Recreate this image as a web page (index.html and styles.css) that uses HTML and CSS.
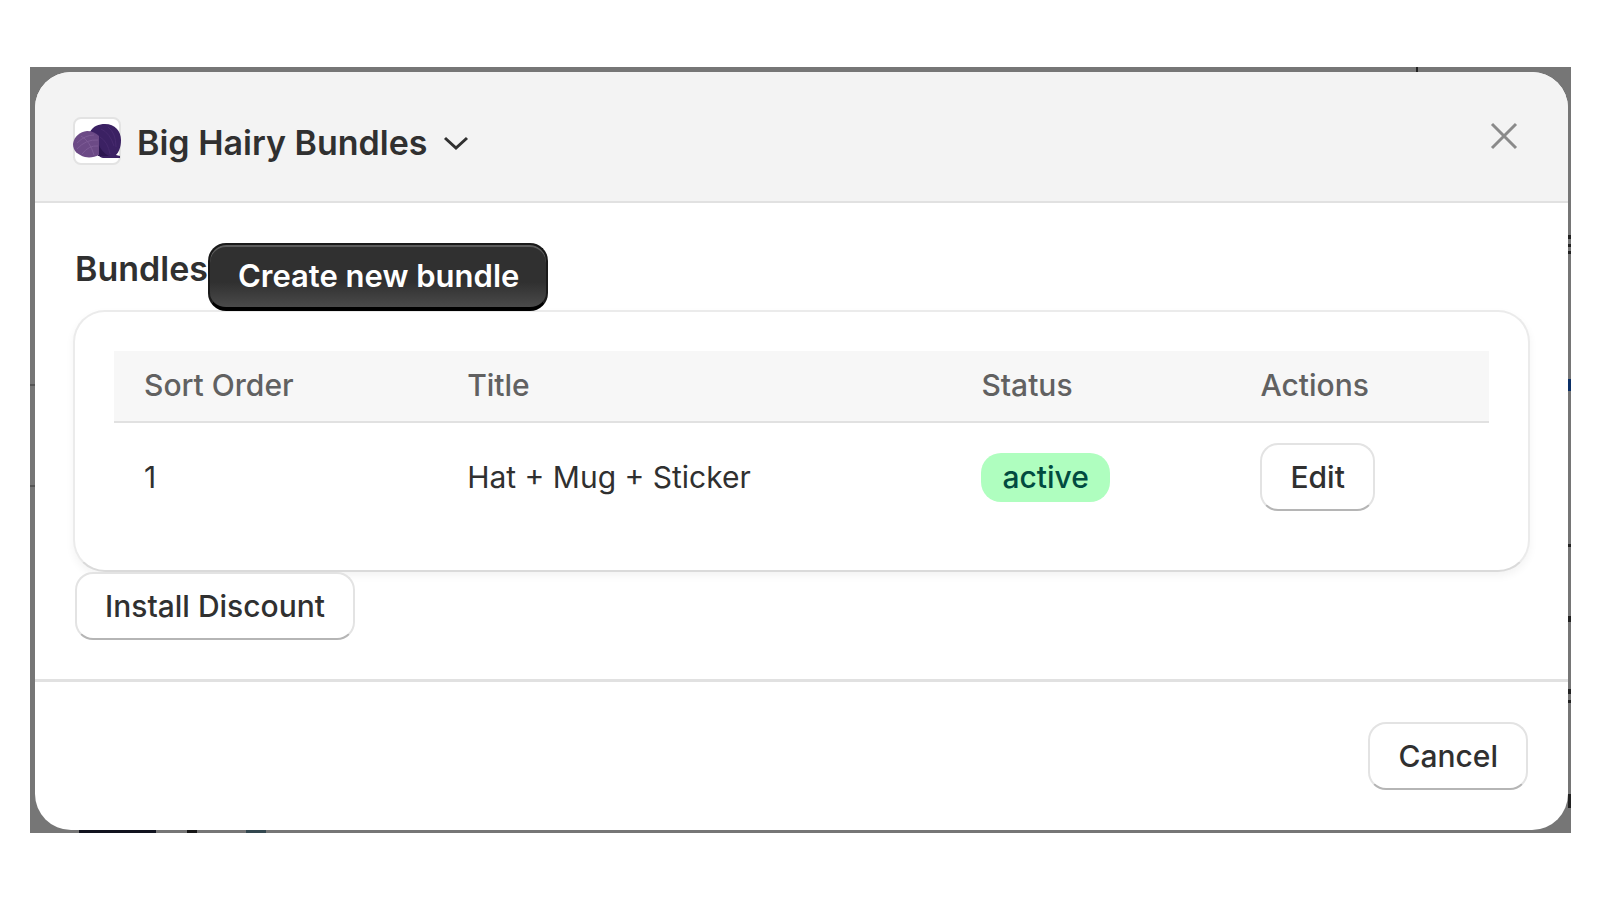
FILE: index.html
```
<!DOCTYPE html>
<html lang="en">
<head>
    <meta charset="UTF-8">
    <title>Big Hairy Bundles</title>
    <link rel="stylesheet" href="styles.css">
</head>
<body>
    <div class="backdrop">
        <div class="modal" role="dialog" aria-labelledby="app-title">
            <!-- Header -->
            <header class="modal-header">
                <button type="button" class="app-menu">
                    <svg class="app-logo" viewBox="0 0 48 48" aria-hidden="true">
                        <rect x="1" y="1" width="46" height="46" rx="7" fill="#fff" stroke="#e3e3e3" stroke-width="2"/>
                        <path d="M17 15C20 9 26 7 32 7C42 7 48 14 48 23C48 30 46 35 43 38L47 39V41H30C25 40 24 36 24 34Z" fill="#3b2163"/>
                        <path d="M28 12q9 4 13 17M35 10q8 6 8 20M27 20q8 5 10 17" fill="none" stroke="#472a6e" stroke-width="1"/>
                        <path d="M25 26V39H36Q29 36 25 26Z" fill="#2c1650"/>
                        <path d="M0 27C1 19 7 15 14 14C19 14 23 16 26 19V38C22 40 17 41 12 40C5 38 0 34 0 27Z" fill="#6c4a86"/>
                        <path d="M4 26q8-8 17-8M4 32q9-10 21-9M9 37q7-9 16-8M8 19q9 5 13 19" fill="none" stroke="#7d5b96" stroke-width="1"/>
                    </svg>
                    <span id="app-title">Big Hairy Bundles</span>
                    <svg class="chevron" viewBox="0 0 26 16" aria-hidden="true">
                        <path d="M2 3L13 13L24 3" fill="none" stroke="#303030" stroke-width="3"/>
                    </svg>
                </button>
                <button type="button" class="close" aria-label="Close">
                    <svg viewBox="0 0 28 28" aria-hidden="true">
                        <path d="M2 2L26 26M26 2L2 26" fill="none" stroke="#8a8a8a" stroke-width="3"/>
                    </svg>
                </button>
            </header>

            <!-- Bundle list -->
            <main class="modal-body">
                <div class="heading">
                    <h1>Bundles</h1>
                    <button type="button" class="btn btn-primary">Create new bundle</button>
                </div>
                <div class="card">
                    <table>
                        <thead>
                            <tr>
                                <th class="col-order">Sort Order</th>
                                <th class="col-title">Title</th>
                                <th class="col-status">Status</th>
                                <th>Actions</th>
                            </tr>
                        </thead>
                        <tbody>
                            <tr>
                                <td>1</td>
                                <td>Hat + Mug + Sticker</td>
                                <td><span class="badge">active</span></td>
                                <td><button type="button" class="btn">Edit</button></td>
                            </tr>
                        </tbody>
                    </table>
                </div>
                <div class="page-actions">
                    <button type="button" class="btn">Install Discount</button>
                </div>
            </main>

            <!-- Footer -->
            <footer class="modal-footer">
                <button type="button" class="btn">Cancel</button>
            </footer>
        </div>
    </div>
</body>
</html>
```
FILE: styles.css
```
* {
    box-sizing: border-box;
}
body {
    font-family: Inter, sans-serif;
    font-size: 30px;
    color: #303030;
    background-color: #fff;
    margin: 0;
    padding: 67px 29px 67px 30px;
}
button {
    font-family: inherit;
    color: inherit;
    cursor: pointer;
}
/* Bits of the page behind the modal show along the edges */
.backdrop {
    background-color: #767676;
    background-image:
        linear-gradient(#222, #222),
        linear-gradient(#555, #555),
        linear-gradient(#555, #555),
        linear-gradient(#11131f, #11131f),
        linear-gradient(#151515, #151515),
        linear-gradient(#33474f, #33474f),
        linear-gradient(#0b2f66, #0b2f66),
        linear-gradient(#222, #222),
        linear-gradient(#222, #222),
        linear-gradient(#222, #222),
        linear-gradient(#222, #222),
        linear-gradient(#222, #222),
        linear-gradient(#222, #222),
        linear-gradient(#222, #222),
        linear-gradient(#222, #222);
    background-repeat: no-repeat;
    background-size: 2px 5px, 5px 2px, 5px 2px, 77px 3px, 10px 3px, 20px 3px,
        3px 12px, 3px 4px, 3px 3px, 3px 3px, 3px 3px, 3px 6px, 3px 5px, 3px 3px, 3px 14px;
    background-position: 1386px 0, 0 317px, 0 418px, 49px 100%, 157px 100%, 216px 100%,
        100% 312px, 100% 168px, 100% 177px, 100% 184px, 100% 477px, 100% 549px, 100% 622px, 100% 633px, 100% 727px;
    padding: 5px 3px 3px 5px;
}
.modal {
    background-color: #fff;
    border-radius: 36px;
    overflow: hidden;
}
.modal-header {
    display: flex;
    justify-content: space-between;
    align-items: flex-start;
    background-color: #f3f3f3;
    border-bottom: 2px solid #e1e1e1;
    padding: 45px 50px 32px 38px;
}
.app-menu {
    display: flex;
    align-items: flex-start;
    gap: 16px;
    background: none;
    border: none;
    padding: 0;
    font-size: 34px;
    font-weight: 600;
    line-height: 52px;
}
.app-logo {
    width: 48px;
    height: 48px;
}
.chevron {
    align-self: center;
    width: 26px;
    height: 16px;
}
.close {
    background: none;
    border: none;
    padding: 5px 0;
}
.close svg {
    display: block;
    width: 28px;
    height: 28px;
}
.modal-body {
    padding: 40px 38px 39px;
}
.heading {
    display: flex;
    align-items: flex-start;
    padding-left: 2px;
}
h1 {
    font-size: 34px;
    font-weight: 600;
    line-height: 52px;
    margin: 0;
}
.btn {
    background-color: #fff;
    border: 2px solid #e3e3e3;
    border-bottom-color: #b5b5b5;
    border-radius: 18px;
    padding: 0 28px;
    font-size: 30px;
    font-weight: 500;
    line-height: 64px;
}
/* Sits above the card's top edge */
.btn-primary {
    z-index: 1;
    background: linear-gradient(#303030 60%, #4a4a4a);
    border: 2px solid #1a1a1a;
    border-bottom: 4px solid #000;
    box-shadow: inset 0 2px 0 #5c5c5c;
    color: #fff;
    font-size: 31px;
    font-weight: 600;
    line-height: 62px;
    padding: 0 27px 0 28px;
}
.card {
    background-color: #fff;
    border: 2px solid #ebebeb;
    border-bottom-color: #dadada;
    border-radius: 32px;
    box-shadow: 0 4px 8px rgba(0, 0, 0, 0.05);
    margin-top: -1px;
    padding: 39px;
}
table {
    width: 100%;
    table-layout: fixed;
    border-collapse: collapse;
}
th {
    background-color: #f7f7f7;
    border-bottom: 2px solid #e1e1e1;
    color: #616161;
    font-weight: 500;
    line-height: 36px;
    text-align: left;
    padding: 16px 30px 18px;
}
td {
    padding: 20px 30px;
    vertical-align: baseline;
}
.col-order {
    width: 23.5%;
}
.col-title {
    width: 37.4%;
}
.col-status {
    width: 20.3%;
}
.badge {
    display: inline-block;
    background-color: #affebf;
    border-radius: 20px;
    color: #014b40;
    font-weight: 500;
    line-height: 49px;
    padding: 0 21px;
}
.page-actions {
    display: flex;
    padding-left: 2px;
}
.modal-footer {
    display: flex;
    justify-content: flex-end;
    border-top: 3px solid #e1e1e1;
    padding: 40px;
}
```
